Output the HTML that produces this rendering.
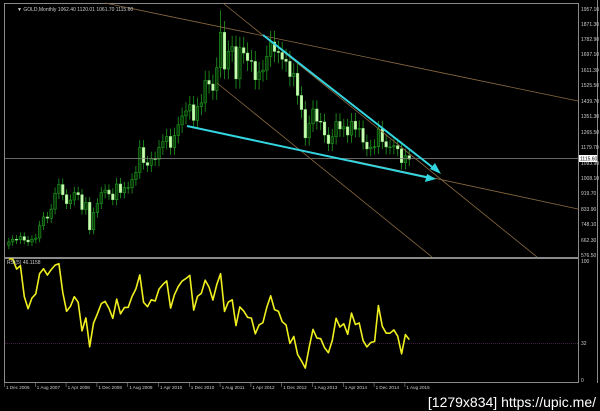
<!DOCTYPE html>
<html><head><meta charset="utf-8"><style>
html,body{margin:0;padding:0;background:#000;width:600px;height:411px;overflow:hidden}
svg{display:block}
text{font-family:"Liberation Sans",sans-serif}
</style></head><body>
<svg id="s" width="600" height="411" viewBox="0 0 600 411" xmlns="http://www.w3.org/2000/svg">
<rect width="600" height="411" fill="#000"/>
<g id="cd"></g>
<g stroke="#8a8a8a" stroke-width="1" fill="none">
<rect x="4.5" y="3.5" width="574" height="254"/>
<rect x="4.5" y="258.5" width="574" height="124"/>
<line x1="597.5" y1="0" x2="597.5" y2="383"/>
</g>
<line x1="5" y1="158.5" x2="578" y2="158.5" stroke="#888" stroke-width="0.7"/>
<line x1="5" y1="343.5" x2="578" y2="343.5" stroke="#5a2a5a" stroke-width="0.7" stroke-dasharray="1,1"/>
<g stroke="#8a6a40" stroke-width="0.8" fill="none">
<line x1="105" y1="3" x2="578" y2="101"/>
<line x1="223" y1="3" x2="537" y2="257"/>
<line x1="217" y1="83" x2="432" y2="257"/>
<line x1="350" y1="160" x2="578" y2="209"/>
</g>
<g id="rsi"></g>
<g stroke="#33d6e0" stroke-width="2" fill="#33d6e0">
<line x1="263" y1="35" x2="436" y2="170"/>
<polygon points="441,174 430,169 435,163" stroke="none"/>
<line x1="187" y1="126" x2="430" y2="178"/>
<polygon points="436,179 425,182 427,174" stroke="none"/>
</g>
<g fill="#ccc" font-size="5">
<text x="17" y="11">▼ GOLD,Monthly  1062.40 1120.01 1061.70 1115.60</text>
<text x="7" y="264">RSI(5) 46.1158</text>
<text x="581" y="11">1957.10</text><text x="581" y="26">1871.30</text><text x="581" y="41">1782.90</text>
<text x="581" y="56">1697.10</text><text x="581" y="72">1611.30</text><text x="581" y="87">1525.50</text>
<text x="581" y="103">1439.70</text><text x="581" y="118">1351.30</text><text x="581" y="134">1265.50</text>
<text x="581" y="149">1179.70</text><text x="581" y="165">1093.90</text><text x="581" y="180">1008.10</text>
<text x="581" y="195">919.70</text><text x="581" y="211">833.90</text><text x="581" y="226">748.10</text>
<text x="581" y="242">662.30</text><text x="581" y="257">576.50</text>
<text x="581" y="263">100</text><text x="581" y="345">32</text><text x="581" y="382">0</text>
</g>
<rect x="579" y="155" width="18" height="7" fill="#fff"/>
<text x="580" y="160.5" font-size="5" fill="#000">1115.60</text>
<g fill="#ccc" font-size="4.6" id="dl"></g>
<text x="596" y="407" font-size="14" fill="#fff" text-anchor="end">[1279x834] https://upic.me/</text>
</svg>
<script>
var c=[632,650,665,662,680,660,650,665,672,742,790,783,834,923,972,915,865,885,927,915,832,872,718,815,865,927,941,919,887,975,927,954,955,1000,1040,1180,1095,1080,1117,1114,1180,1212,1242,1180,1247,1307,1357,1385,1420,1332,1410,1430,1556,1536,1500,1628,1826,1620,1720,1746,1565,1740,1710,1668,1663,1560,1604,1614,1692,1772,1719,1713,1675,1663,1578,1596,1472,1393,1234,1313,1396,1327,1323,1250,1202,1240,1326,1284,1296,1250,1327,1282,1287,1210,1172,1182,1184,1284,1213,1183,1183,1190,1172,1095,1134,1115];
var S=3.85;
var ns="http://www.w3.org/2000/svg",g=document.getElementById('cd');
function Y(p){return 9+(1957.1-p)*0.1782;}
function el(t,a,par){var e=document.createElementNS(ns,t);for(var k in a)e.setAttribute(k,a[k]);par.appendChild(e);return e;}
for(var i=1;i<c.length;i++){
 var o=c[i-1],cl=c[i],x=5+i*S;
 var h=Math.max(o,cl)*1.035+(i==56?60:0),l=Math.min(o,cl)*0.965;
 el('line',{x1:x,y1:Y(h),x2:x,y2:Y(l),stroke:'#1f9a1f','stroke-width':0.8},g);
 var t=Y(Math.max(o,cl)),b=Y(Math.min(o,cl));
 el('rect',{x:x-1.3,y:t,width:2.6,height:Math.max(b-t,0.8),fill:cl>=o?'#0a3a0a':'#c8ffb0',stroke:cl>=o?'#22b022':'#90e080','stroke-width':0.5},g);
}
var n=5,r=document.getElementById('rsi'),pts=[],ag=0,al=0;
for(var i=1;i<c.length;i++){var d=c[i]-c[i-1],gn=d>0?d:0,ls=d<0?-d:0;
 if(i<=n){ag+=gn/n;al+=ls/n;}else{ag=(ag*(n-1)+gn)/n;al=(al*(n-1)+ls)/n;}
 var rs=al==0?100:100-100/(1+ag/al);
 pts.push((5+i*S).toFixed(1)+','+(380-rs*1.21).toFixed(1));}
el('polyline',{points:pts.join(' '),fill:'none',stroke:'#f0f020','stroke-width':1.6,'stroke-linejoin':'round'},r);
var dl=document.getElementById('dl'),lab=['1 Dec 2006','1 Aug 2007','1 Apr 2008','1 Dec 2008','1 Aug 2009','1 Apr 2010','1 Dec 2010','1 Aug 2011','1 Apr 2012','1 Dec 2012','1 Aug 2013','1 Apr 2014','1 Dec 2014','1 Aug 2015'];
for(var k=0;k<lab.length;k++){var x=4+k*8*S;el('line',{x1:x+0.5,y1:383,x2:x+0.5,y2:387,stroke:'#888','stroke-width':0.6},dl);var t=el('text',{x:x+2,y:389},dl);t.textContent=lab[k];}
</script>
</body></html>
